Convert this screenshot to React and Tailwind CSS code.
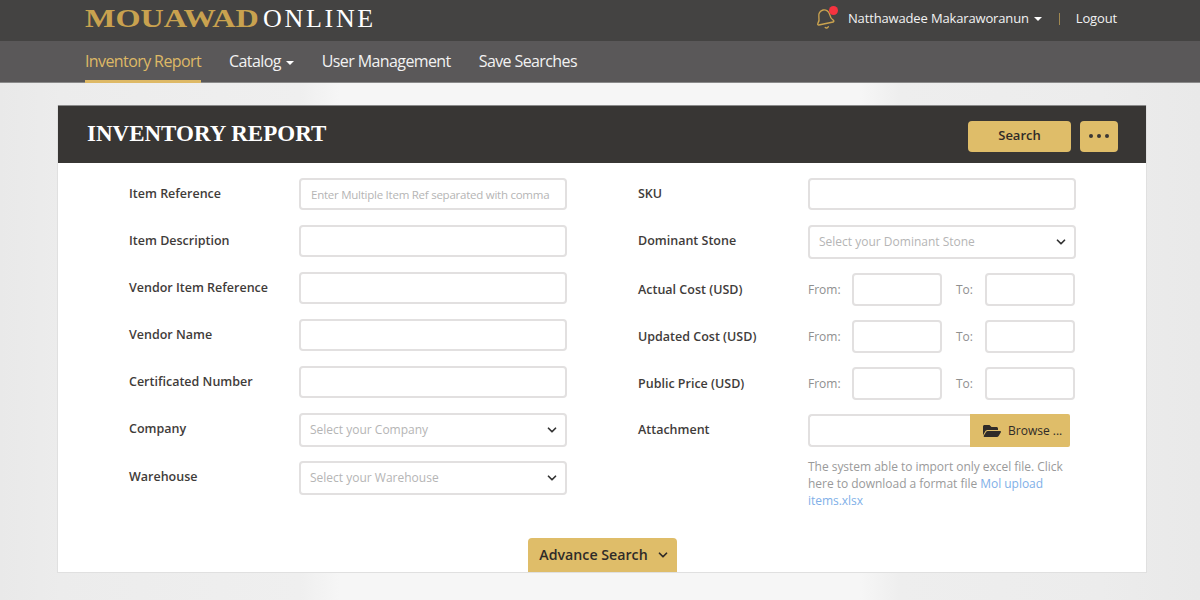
import { Bell, ChevronDown } from "lucide-react";
import { FaFolderOpen } from "react-icons/fa";

const inputCls =
  "block w-full h-8 rounded-[4px] border-2 border-[#e2e0e0] bg-white pl-[10px] pr-1 text-[11.5px] tracking-[-0.25px] outline-none placeholder:text-[#b5b5b5]";

function Caret({ className }) {
  return (
    <span
      className={
        "inline-block w-0 h-0 border-x-[4px] border-x-transparent border-t-[4px] border-t-white " +
        className
      }
    />
  );
}

function Label({ children, className = "" }) {
  return (
    <label className={"shrink-0 w-[170px] text-[12.5px] leading-5 font-semibold text-[#3f3c3a] " + className}>
      {children}
    </label>
  );
}

function TextRow({ label, placeholder, className = "" }) {
  return (
    <div className={"flex items-start " + className}>
      <Label className="pt-[6px]">{label}</Label>
      <input className={inputCls} placeholder={placeholder} />
    </div>
  );
}

function SelectRow({ label, placeholder, className = "" }) {
  return (
    <div className={"flex items-start " + className}>
      <Label className="pt-[6px]">{label}</Label>
      <div className="relative flex-1">
        <select className="block w-full h-[34px] appearance-none rounded-[4px] border-2 border-[#e2e0e0] bg-white pl-[9px] text-xs text-[#b5b5b5] outline-none">
          <option>{placeholder}</option>
        </select>
        <ChevronDown
          size={14}
          strokeWidth={3}
          className="absolute right-[8px] top-[10px] text-[#333] pointer-events-none"
        />
      </div>
    </div>
  );
}

function RangeRow({ label, className = "" }) {
  return (
    <div className={"flex items-start " + className}>
      <Label className="pt-[7px]">{label}</Label>
      <div className="flex flex-1 items-center text-xs text-[#8f8f8f]">
        <span className="w-[44px]">From:</span>
        <input className={inputCls + " !w-[90px] !h-[33px]"} />
        <span className="w-[43px] pl-[14px]">To:</span>
        <input className={inputCls + " !w-[90px] !h-[33px]"} />
      </div>
    </div>
  );
}

export default function App() {
  return (
    <div className="h-[600px] overflow-hidden bg-[linear-gradient(90deg,#e9e9e9_0,#ececec_60px,#efefef_300px,#f6f6f6_340px,#f6f6f6_860px,#eeeeee_900px,#ececec_1100px,#e9e9e9_1200px)] font-['Open_Sans',sans-serif]">
      <header className="h-[41px] bg-[#444342] pl-[85px] pr-[83px] flex items-center justify-between">
        <div className="flex font-['Liberation_Serif',serif] text-[26px] leading-none -mt-[4px]">
          <span className="inline-block w-[178px] origin-left scale-x-[1.24] font-bold text-[#c9a24f]">MOUAWAD</span>
          <span className="text-white tracking-[2.7px]">ONLINE</span>
        </div>
        <div className="flex items-center text-[13px] tracking-[-0.15px] text-[#f2f2f2] -mt-[4px]">
          <div className="relative mr-[12px]">
            <Bell size={22} strokeWidth={1.5} className="text-[#c9a24f] -rotate-12" />
            <span className="absolute -top-[2px] right-[-2px] w-[9px] h-[9px] rounded-full bg-[#f5333f]" />
          </div>
          <span>Natthawadee Makaraworanun</span>
          <Caret className="ml-[5px]" />
          <span className="ml-[17px] mr-[16px] w-px h-3 bg-[#a08850]" />
          <span>Logout</span>
        </div>
      </header>

      <nav className="h-[42px] bg-[#5a5859] border-b border-[#8a8a8a] pl-[85px] flex items-stretch gap-[28px] text-base text-[#f2f2f2] tracking-[-0.6px]">
        <a className="flex items-center text-[#deb966] border-b-[3px] border-[#deb966] pt-[1px] h-[42px]">
          Inventory Report
        </a>
        <a className="flex items-center -mt-[2px]">
          Catalog
          <Caret className="ml-[5px] mt-[4px]" />
        </a>
        <a className="flex items-center -mt-[2px]">User Management</a>
        <a className="flex items-center -mt-[2px]">Save Searches</a>
      </nav>

      <main className="pl-[57px] pr-[53px] pt-[22px]">
        <section className="h-[468px] overflow-hidden bg-white border-x border-b border-[#e0e0e0]">
          <div className="h-[58px] bg-[#383634] border-t border-[#8a8a8a] pl-[29px] pr-[28px] flex items-center justify-between">
            <h1 className="font-['Liberation_Serif',serif] text-[23px] font-bold text-white">
              INVENTORY REPORT
            </h1>
            <div className="flex items-center gap-[9px] mt-[3px]">
              <button className="w-[103px] h-[31px] rounded-[4px] bg-[#dfbd69] text-[13px] font-semibold text-[#2f2b28]">
                Search
              </button>
              <button className="w-[38px] h-[31px] rounded-[4px] bg-[#dfbd69] flex items-center justify-center gap-[4px]">
                <span className="w-1 h-1 rounded-full bg-[#3a3735]" />
                <span className="w-1 h-1 rounded-full bg-[#3a3735]" />
                <span className="w-1 h-1 rounded-full bg-[#3a3735]" />
              </button>
            </div>
          </div>

          <div className="flex gap-[71px] pl-[71px] pt-[15px]">
            <div className="w-[438px]">
              <TextRow label="Item Reference" placeholder="Enter Multiple Item Ref separated with comma" />
              <TextRow label="Item Description" className="mt-[15px]" />
              <TextRow label="Vendor Item Reference" className="mt-[15px]" />
              <TextRow label="Vendor Name" className="mt-[15px]" />
              <TextRow label="Certificated Number" className="mt-[15px]" />
              <SelectRow label="Company" placeholder="Select your Company" className="mt-[15px]" />
              <SelectRow label="Warehouse" placeholder="Select your Warehouse" className="mt-[14px]" />
            </div>

            <div className="w-[438px]">
              <TextRow label="SKU" />
              <SelectRow label="Dominant Stone" placeholder="Select your Dominant Stone" className="mt-[15px]" />
              <RangeRow label="Actual Cost (USD)" className="mt-[14px]" />
              <RangeRow label="Updated Cost (USD)" className="mt-[14px]" />
              <RangeRow label="Public Price (USD)" className="mt-[14px]" />
              <div className="flex items-start mt-[14px]">
                <Label className="pt-[6px]">Attachment</Label>
                <div className="flex-1">
                  <div className="flex w-[262px] h-[33px]">
                    <div className="flex-1 rounded-l-[4px] border-2 border-r-0 border-[#e2e0e0]" />
                    <button className="w-[100px] bg-[#dfbd69] rounded-r-[2px] flex items-center gap-[7px] pl-[13px] text-xs text-[#2f2b28]">
                      <FaFolderOpen size={18} />
                      Browse ...
                    </button>
                  </div>
                  <p className="mt-[11px] text-xs tracking-[-0.03px] leading-[17px] text-[#9a9a9a]">
                    The system able to import only excel file. Click here to download a format file{" "}
                    <a className="text-[#7fb0e8]">Mol upload items.xlsx</a>
                  </p>
                </div>
              </div>
            </div>
          </div>

          <div className="flex justify-center mt-[29px]">
            <button className="w-[149px] h-[34px] rounded-t-[4px] bg-[#dfbd69] flex items-center justify-center gap-[8px] pl-[5px] text-[14.2px] font-semibold text-[#2f2b28]">
              Advance Search
              <ChevronDown size={14} strokeWidth={3} />
            </button>
          </div>
        </section>
      </main>
    </div>
  );
}
